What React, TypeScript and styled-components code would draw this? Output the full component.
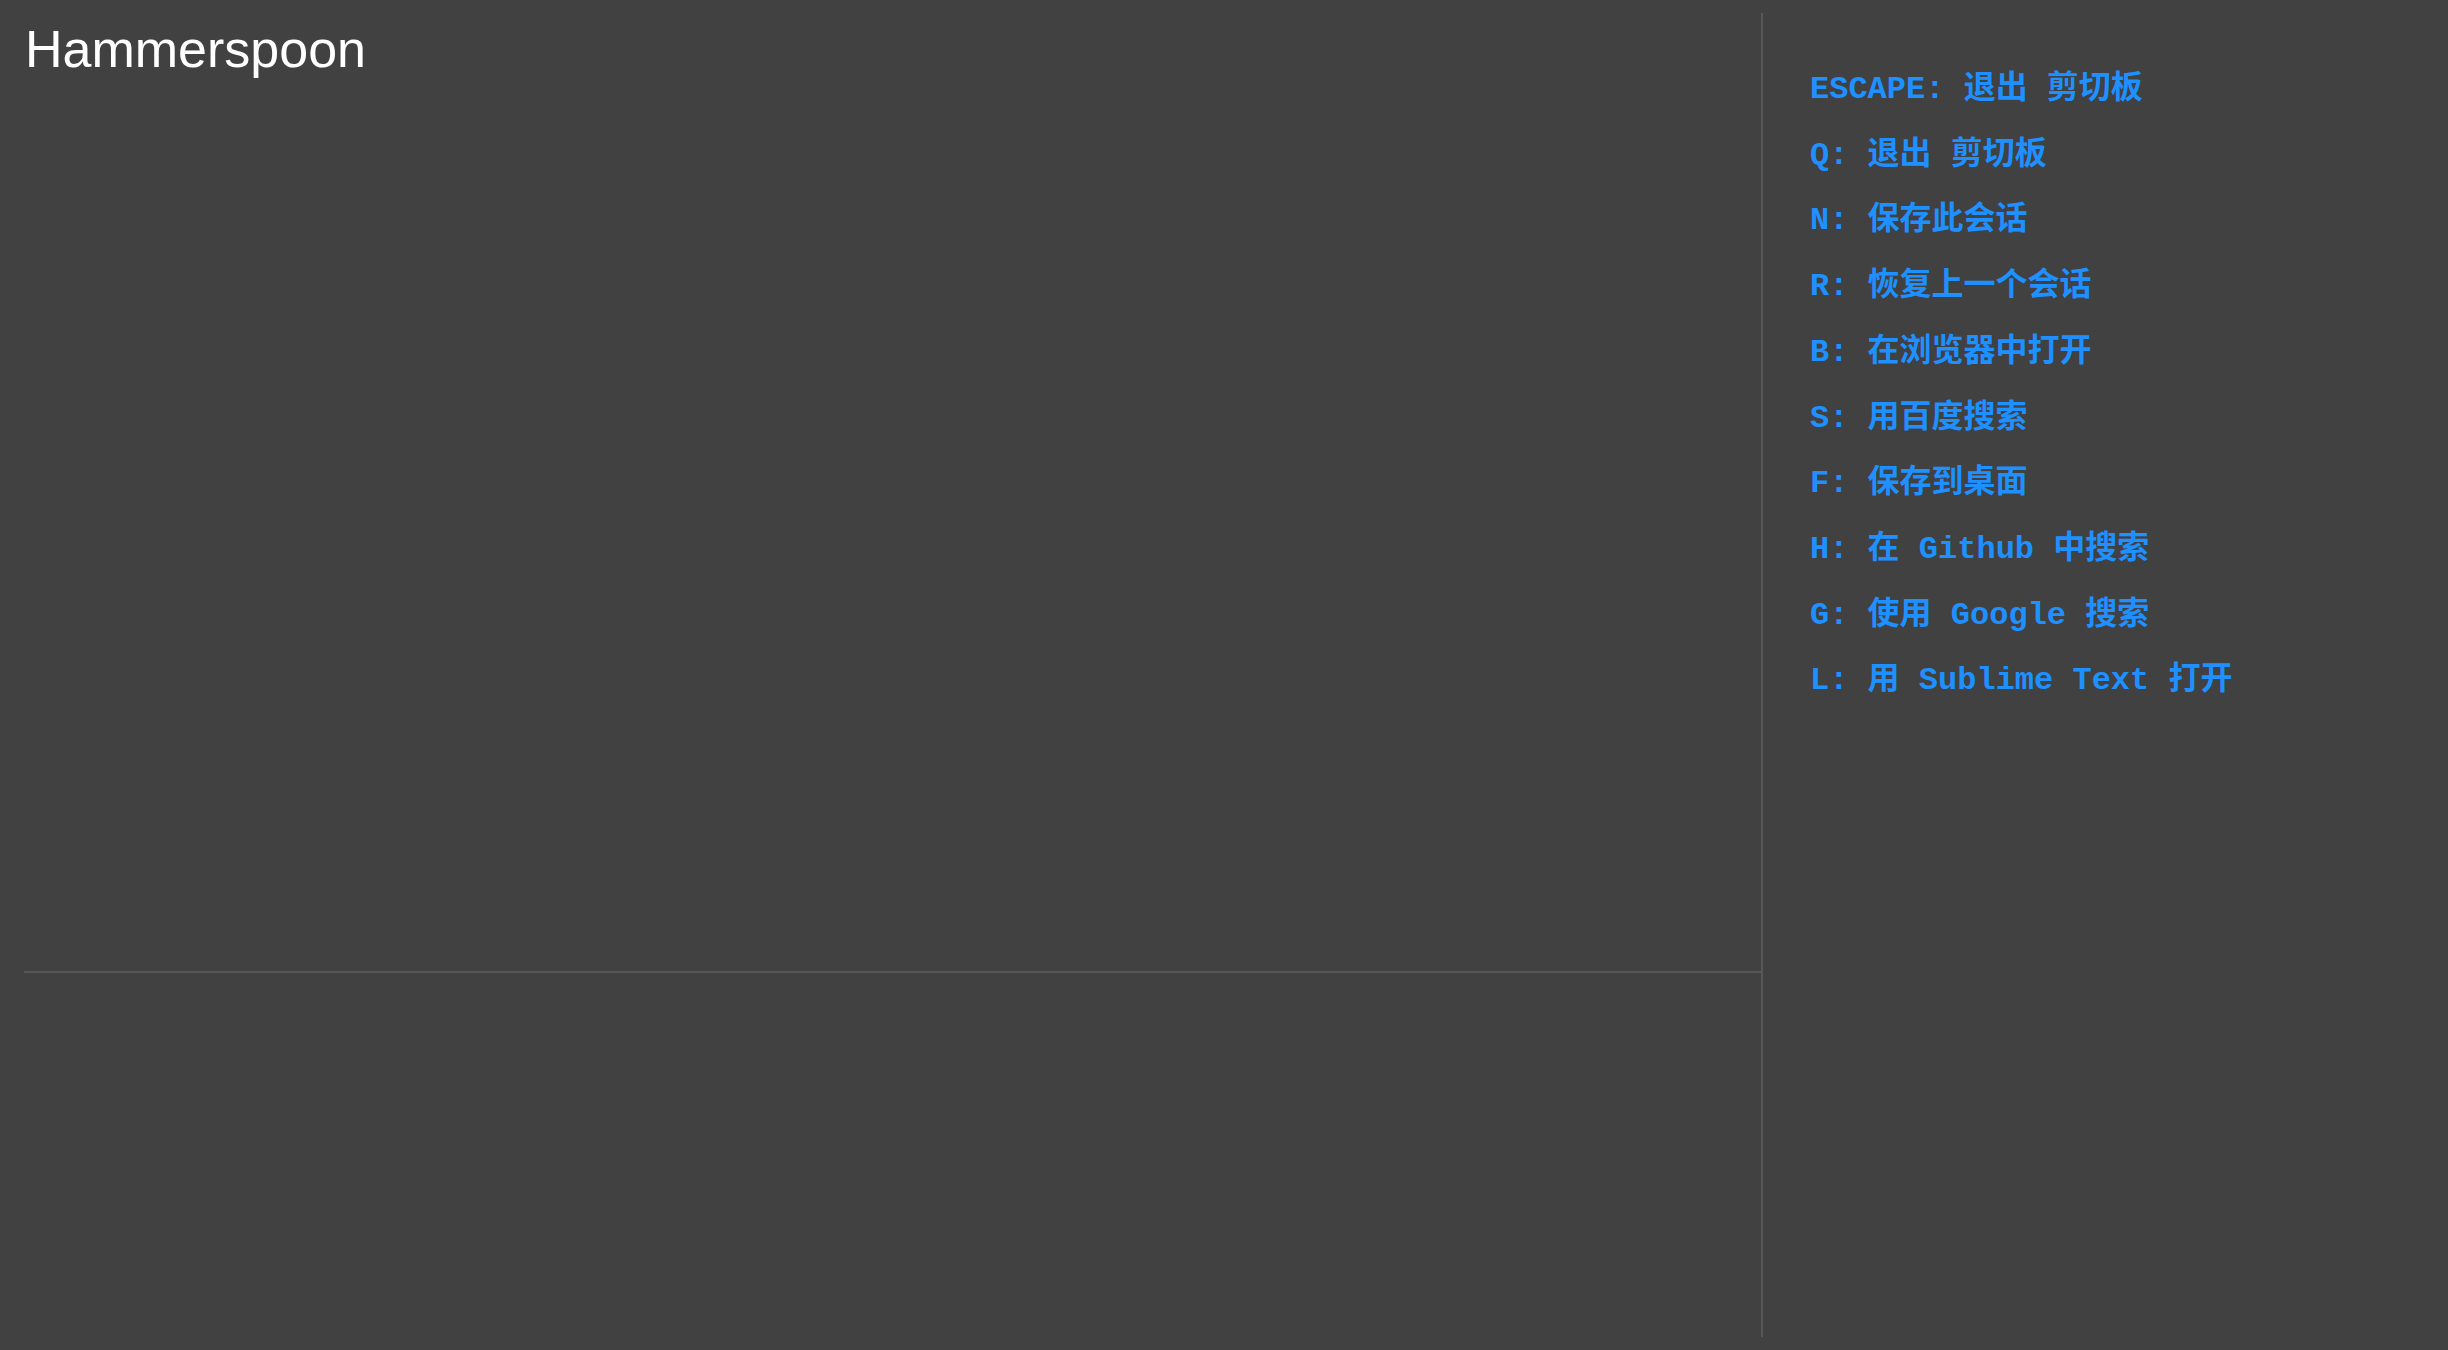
import React from "react";
import styled, { createGlobalStyle } from "styled-components";

const GlobalStyle = createGlobalStyle`
  html, body {
    margin: 0;
    padding: 0;
    background: #414141;
  }
  body {
    font-family: "Liberation Sans", Arial, sans-serif;
  }
`;

const Page = styled.div`
  display: flex;
  box-sizing: border-box;
  width: 100%;
  height: 1350px;
  padding: 13px 0 13px 24px;
  background: #414141;
`;

const Workspace = styled.main`
  flex: 1;
  min-width: 0;
  display: grid;
  grid-template-rows: 960px 1fr;
`;

const Header = styled.header`
  border-bottom: 2px solid #575757;
`;

const Title = styled.h1`
  margin: 6px 0 0 1px;
  font-family: "Liberation Sans", Arial, sans-serif;
  font-size: 52px;
  line-height: 60px;
  font-weight: 400;
  color: #ffffff;
`;

const Console = styled.div``;

const Sidebar = styled.aside`
  flex: 0 0 687px;
  box-sizing: border-box;
  border-left: 2px solid #575757;
  padding: 44px 0 0 47px;
`;

const ShortcutList = styled.ul`
  list-style: none;
  margin: 0;
  padding: 0;
`;

const Shortcut = styled.li`
  font-family: "Liberation Mono", "Courier New", "Noto Sans CJK SC", monospace;
  font-weight: 700;
  font-size: 32px;
  line-height: 65.7px;
  color: #1e90ff;
  white-space: pre;
`;

const Key = styled.span``;

const shortcuts: [string, string][] = [
  ["ESCAPE", "退出 剪切板"],
  ["Q", "退出 剪切板"],
  ["N", "保存此会话"],
  ["R", "恢复上一个会话"],
  ["B", "在浏览器中打开"],
  ["S", "用百度搜索"],
  ["F", "保存到桌面"],
  ["H", "在 Github 中搜索"],
  ["G", "使用 Google 搜索"],
  ["L", "用 Sublime Text 打开"],
];

export default function App() {
  return (
    <>
      <GlobalStyle />
      <Page>
        <Workspace>
          <Header>
            <Title>Hammerspoon</Title>
          </Header>
          <Console />
        </Workspace>
        <Sidebar>
          <ShortcutList>
            {shortcuts.map(([key, label]) => (
              <Shortcut key={key}>
                <Key>{key}:</Key> {label}
              </Shortcut>
            ))}
          </ShortcutList>
        </Sidebar>
      </Page>
    </>
  );
}
